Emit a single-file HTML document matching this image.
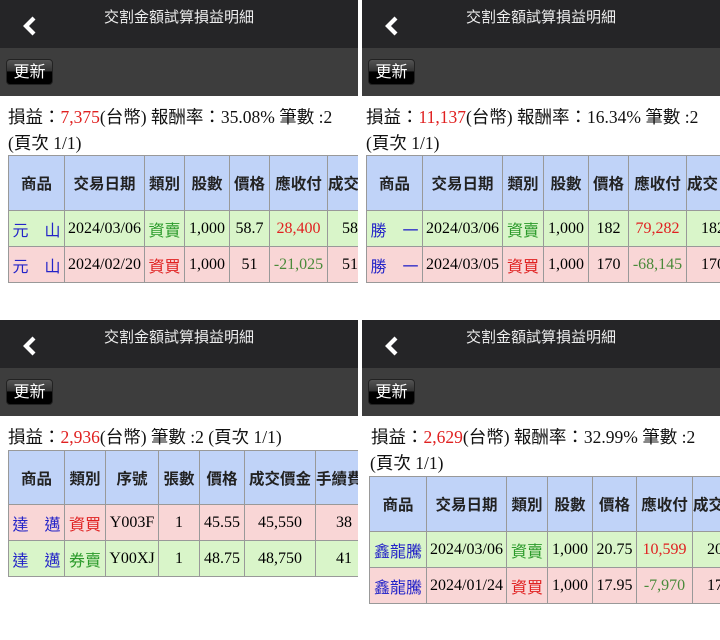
<!DOCTYPE html>
<html><head><meta charset="utf-8"><style>
*{margin:0;padding:0;box-sizing:border-box}
body{width:720px;height:640px;background:#fff;position:relative;overflow:hidden;font-family:"Liberation Serif","Noto Sans CJK TC",serif;}
.p{position:absolute;width:358px;height:320px;overflow:hidden;background:#fff}
.hd{height:48px;background:#252527;position:relative;color:#fff}
.hd .t{position:absolute;left:0;right:0;top:6px;text-align:center;font:15px "Liberation Sans","Noto Sans CJK TC",sans-serif;color:#eee}
.hd svg{position:absolute;left:22px;top:16px}
.tb{height:48px;background:#3d3d3d;position:relative}
.btn{position:absolute;left:6px;top:11px;width:47px;height:26px;border-radius:4px;background:linear-gradient(#555 0,#333 45%,#000 50%,#000 100%);color:#fff;font:16px "Liberation Sans","Noto Sans CJK TC",sans-serif;text-align:center;line-height:25px;border:1px solid #222}
.s{font-size:17.5px;color:#111;position:absolute;line-height:26px;white-space:nowrap}
.r{color:#e02020}
table{position:absolute;border-collapse:collapse;table-layout:fixed;font-size:16px}
td,th{border:1px solid #999;text-align:center;white-space:nowrap;overflow:hidden;height:36px;padding:0}
th{background:#c0d3f8;font:bold 15.5px "Liberation Sans","Noto Sans CJK TC",sans-serif;color:#222}
.g td{background:#d9f5c9}.k td{background:#f9d6d6}
.b{color:#2424c8;font-family:"Liberation Sans","Noto Sans CJK TC",sans-serif}
.gn{color:#2a9a2a;font-family:"Liberation Sans","Noto Sans CJK TC",sans-serif}
.rd{color:#e02020;font-family:"Liberation Sans","Noto Sans CJK TC",sans-serif}
.gt{color:#4a8a3a}
.rt{color:#e02020}
</style></head><body>

<div class="p" style="left:0;top:0">
<div class="hd"><div class="t">交割金額試算損益明細</div><svg width="16" height="20" viewBox="0 0 16 20"><path d="M12 2 L4 10 L12 18" stroke="#fff" stroke-width="4.2" fill="none"/></svg></div>
<div class="tb"><div class="btn">更新</div></div>
<div class="s" style="left:8px;top:104px">損益：<span class="r">7,375</span>(台幣) 報酬率：35.08% 筆數 :2</div>
<div class="s" style="left:8px;top:130px">(頁次 1/1)</div>
<table style="left:8px;top:155px;width:400px">
<colgroup><col style="width:56px"><col style="width:80px"><col style="width:40px"><col style="width:45px"><col style="width:40px"><col style="width:58px"><col style="width:81px"></colgroup>
<tr><th style="height:55px">商品</th><th>交易日期</th><th>類別</th><th>股數</th><th>價格</th><th>應收付</th><th style="text-align:left">成交</th></tr>
<tr class="g"><td class="b">元　山</td><td>2024/03/06</td><td class="gn">資賣</td><td>1,000</td><td>58.7</td><td class="rt">28,400</td><td style="text-align:left;padding-left:14px">58.7</td></tr>
<tr class="k"><td class="b">元　山</td><td>2024/02/20</td><td class="rd">資買</td><td>1,000</td><td>51</td><td class="gt">-21,025</td><td style="text-align:left;padding-left:14px">51</td></tr>
</table>
</div>

<div class="p" style="left:362px;top:0">
<div class="hd"><div class="t">交割金額試算損益明細</div><svg width="16" height="20" viewBox="0 0 16 20"><path d="M12 2 L4 10 L12 18" stroke="#fff" stroke-width="4.2" fill="none"/></svg></div>
<div class="tb"><div class="btn">更新</div></div>
<div class="s" style="left:4px;top:104px">損益：<span class="r">11,137</span>(台幣) 報酬率：16.34% 筆數 :2</div>
<div class="s" style="left:4px;top:130px">(頁次 1/1)</div>
<table style="left:4px;top:155px;width:400px">
<colgroup><col style="width:56px"><col style="width:80px"><col style="width:41px"><col style="width:45px"><col style="width:40px"><col style="width:58px"><col style="width:80px"></colgroup>
<tr><th style="height:55px">商品</th><th>交易日期</th><th>類別</th><th>股數</th><th>價格</th><th>應收付</th><th style="text-align:left">成交</th></tr>
<tr class="g"><td class="b">勝　一</td><td>2024/03/06</td><td class="gn">資賣</td><td>1,000</td><td>182</td><td class="rt">79,282</td><td style="text-align:left;padding-left:14px">182</td></tr>
<tr class="k"><td class="b">勝　一</td><td>2024/03/05</td><td class="rd">資買</td><td>1,000</td><td>170</td><td class="gt">-68,145</td><td style="text-align:left;padding-left:14px">170</td></tr>
</table>
</div>

<div class="p" style="left:0;top:320px">
<div class="hd"><div class="t">交割金額試算損益明細</div><svg width="16" height="20" viewBox="0 0 16 20"><path d="M12 2 L4 10 L12 18" stroke="#fff" stroke-width="4.2" fill="none"/></svg></div>
<div class="tb"><div class="btn">更新</div></div>
<div class="s" style="left:8px;top:104px">損益：<span class="r">2,936</span>(台幣) 筆數 :2 (頁次 1/1)</div>
<table style="left:8px;top:130px;width:400px">
<colgroup><col style="width:56px"><col style="width:41px"><col style="width:53px"><col style="width:41px"><col style="width:45px"><col style="width:71px"><col style="width:93px"></colgroup>
<tr><th style="height:54px">商品</th><th>類別</th><th>序號</th><th>張數</th><th>價格</th><th>成交價金</th><th style="text-align:left">手續費</th></tr>
<tr class="k"><td class="b">達　邁</td><td class="rd">資買</td><td>Y003F</td><td>1</td><td>45.55</td><td>45,550</td><td style="text-align:left;padding-left:20px">38</td></tr>
<tr class="g"><td class="b">達　邁</td><td class="gn">券賣</td><td>Y00XJ</td><td>1</td><td>48.75</td><td>48,750</td><td style="text-align:left;padding-left:20px">41</td></tr>
</table>
</div>

<div class="p" style="left:362px;top:320px">
<div class="hd"><div class="t">交割金額試算損益明細</div><svg width="16" height="20" viewBox="0 0 16 20"><path d="M12 2 L4 10 L12 18" stroke="#fff" stroke-width="4.2" fill="none"/></svg></div>
<div class="tb"><div class="btn">更新</div></div>
<div class="s" style="left:9px;top:104px">損益：<span class="r">2,629</span>(台幣) 報酬率：32.99% 筆數 :2</div>
<div class="s" style="left:8px;top:130px">(頁次 1/1)</div>
<table style="left:7px;top:156px;width:400px">
<colgroup><col style="width:57px"><col style="width:80px"><col style="width:41px"><col style="width:45px"><col style="width:44px"><col style="width:56px"><col style="width:77px"></colgroup>
<tr><th style="height:55px">商品</th><th>交易日期</th><th>類別</th><th>股數</th><th>價格</th><th>應收付</th><th style="text-align:left">成交</th></tr>
<tr class="g"><td class="b">鑫龍騰</td><td>2024/03/06</td><td class="gn">資賣</td><td>1,000</td><td>20.75</td><td class="rt">10,599</td><td style="text-align:left;padding-left:14px">20.75</td></tr>
<tr class="k"><td class="b">鑫龍騰</td><td>2024/01/24</td><td class="rd">資買</td><td>1,000</td><td>17.95</td><td class="gt">-7,970</td><td style="text-align:left;padding-left:14px">17.95</td></tr>
</table>
</div>

</body></html>
